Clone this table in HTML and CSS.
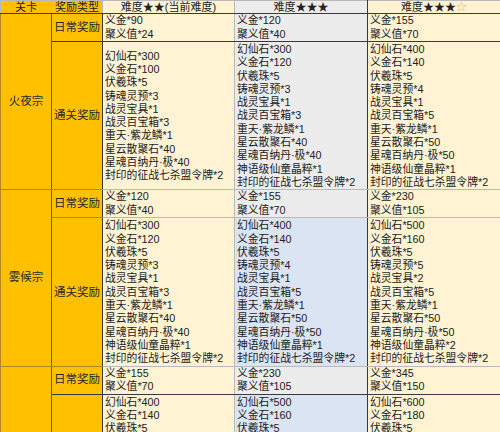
FILE: index.html
```html
<!DOCTYPE html>
<html lang="zh">
<head>
<meta charset="utf-8">
<link rel="stylesheet" href="styles.css">
</head>
<body>
<table class="sheet">
  <colgroup>
    <col class="c1"><col class="c2"><col class="c3"><col class="c4"><col class="c5">
  </colgroup>
  <thead>
    <tr class="head">
      <th class="amber">关卡</th>
      <th class="amber">奖励类型</th>
      <th class="cream">难度★★(当前难度)</th>
      <th class="gray mid">难度★★★</th>
      <th class="cream">难度★★★<span class="hollow">☆</span></th>
    </tr>
  </thead>
  <tbody>
    <tr class="daily group-top">
      <td class="amber stage" rowspan="2">火夜宗</td>
      <td class="amber type dark-b">日常奖励</td>
      <td class="cream dark-b">义金*90<br>聚义值*24</td>
      <td class="gray mid dark-b">义金*120<br>聚义值*40</td>
      <td class="cream dark-b">义金*155<br>聚义值*70</td>
    </tr>
    <tr class="clear">
      <td class="amber type">通关奖励</td>
      <td class="cream">幻仙石*300<br>义金石*100<br>伏羲珠*5<br>铸魂灵预*3<br>战灵宝具*1<br>战灵百宝箱*3<br>重天·紫龙鳞*1<br>星云散聚石*40<br>星魂百纳丹·极*40<br>封印的征战七杀盟令牌*2</td>
      <td class="gray mid">幻仙石*300<br>义金石*120<br>伏羲珠*5<br>铸魂灵预*3<br>战灵宝具*1<br>战灵百宝箱*3<br>重天·紫龙鳞*1<br>星云散聚石*40<br>星魂百纳丹·极*40<br>神语级仙童晶粹*1<br>封印的征战七杀盟令牌*2</td>
      <td class="cream">幻仙石*400<br>义金石*140<br>伏羲珠*5<br>铸魂灵预*4<br>战灵宝具*1<br>战灵百宝箱*5<br>重天·紫龙鳞*1<br>星云散聚石*50<br>星魂百纳丹·极*50<br>神语级仙童晶粹*1<br>封印的征战七杀盟令牌*2</td>
    </tr>
    <tr class="daily group-top">
      <td class="amber stage" rowspan="2">雾候宗</td>
      <td class="amber type">日常奖励</td>
      <td class="cream">义金*120<br>聚义值*40</td>
      <td class="gray mid">义金*155<br>聚义值*70</td>
      <td class="cream">义金*230<br>聚义值*105</td>
    </tr>
    <tr class="clear">
      <td class="amber type">通关奖励</td>
      <td class="cream">幻仙石*300<br>义金石*120<br>伏羲珠*5<br>铸魂灵预*3<br>战灵宝具*1<br>战灵百宝箱*3<br>重天·紫龙鳞*1<br>星云散聚石*40<br>星魂百纳丹·极*40<br>神语级仙童晶粹*1<br>封印的征战七杀盟令牌*2</td>
      <td class="blue mid">幻仙石*400<br>义金石*140<br>伏羲珠*5<br>铸魂灵预*4<br>战灵宝具*1<br>战灵百宝箱*5<br>重天·紫龙鳞*1<br>星云散聚石*50<br>星魂百纳丹·极*50<br>神语级仙童晶粹*1<br>封印的征战七杀盟令牌*2</td>
      <td class="cream">幻仙石*500<br>义金石*160<br>伏羲珠*5<br>铸魂灵预*5<br>战灵宝具*2<br>战灵百宝箱*5<br>重天·紫龙鳞*1<br>星云散聚石*50<br>星魂百纳丹·极*50<br>神语级仙童晶粹*2<br>封印的征战七杀盟令牌*2</td>
    </tr>
    <tr class="daily group-top">
      <td class="amber stage" rowspan="2"></td>
      <td class="amber type dark-b">日常奖励</td>
      <td class="cream dark-b">义金*155<br>聚义值*70</td>
      <td class="gray mid dark-b">义金*230<br>聚义值*105</td>
      <td class="cream dark-b">义金*345<br>聚义值*150</td>
    </tr>
    <tr class="clear">
      <td class="amber type"></td>
      <td class="cream top">幻仙石*400<br>义金石*140<br>伏羲珠*5</td>
      <td class="blue mid top">幻仙石*500<br>义金石*160<br>伏羲珠*5</td>
      <td class="cream top">幻仙石*600<br>义金石*180<br>伏羲珠*5</td>
    </tr>
  </tbody>
</table>
</body>
</html>
```
FILE: styles.css
```css
html, body {
  margin: 0;
  padding: 0;
  background: #ffffff;
}
body {
  font-family: "Liberation Sans", "Noto Sans CJK SC", sans-serif;
  color: #222222;
  overflow: hidden;
}
.sheet {
  border-collapse: collapse;
  table-layout: fixed;
  width: 500px;
  font-size: 10.8px;
  line-height: 13.3px;
}
.c1 { width: 51px; }
.c2 { width: 51px; }
.c3 { width: 132px; }
.c4 { width: 133px; }
.c5 { width: 133px; }

.sheet th, .sheet td {
  border: 1px solid #b9b9b9;
  padding: 0 2px;
  vertical-align: middle;
  text-align: left;
  white-space: nowrap;
  overflow: hidden;
}
.sheet th {
  font-weight: normal;
  text-align: center;
  height: 12px;
  line-height: 12px;
  font-size: 11px;
  border-bottom: 1px solid #3a3a3a;
}
.hollow { color: #e3b75a; }

.amber { background: #ffc000; }
.cream { background: #fff3d4; }
.gray { background: #ececec; }
.blue { background: #dbe4f3; }

.mid {
  border-left: 1px solid #3a3a3a !important;
  border-right: 1px solid #3a3a3a !important;
}
.sheet td.amber { border-color: #b08a1e; }
.stage, .type {
  text-align: center !important;
  font-size: 11.5px;
  color: #2a2a2a;
}
.stage { border-right: 1px solid #6b5a20 !important; }
.type { border-right: 1px solid #3a3a3a !important; }

.daily td { height: 27px; }
.clear td { height: 143px; padding-top: 1px; }
.sheet td.top { vertical-align: top; }
.group-top td { border-top: 1px solid #3a3a3a; }
.sheet td.dark-b { border-bottom: 1px solid #3a3a3a; }
```
